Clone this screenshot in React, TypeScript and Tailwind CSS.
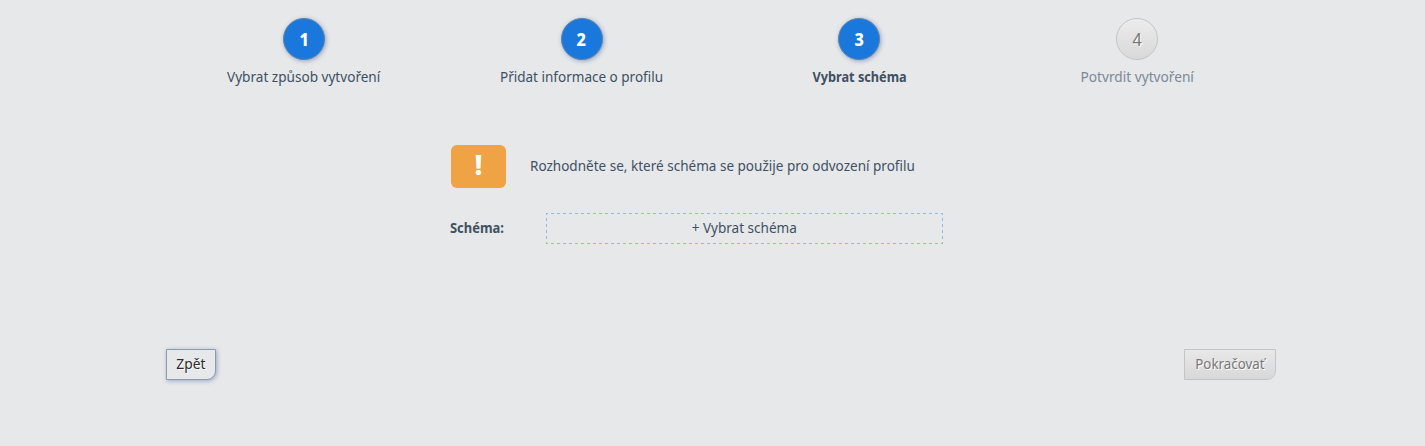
import { clsx } from "clsx";

const steps = [
  { n: "1", label: "Vybrat způsob vytvoření", state: "done", fit: "scale-x-[0.905]" },
  { n: "2", label: "Přidat informace o profilu", state: "done", fit: "scale-x-[0.901]" },
  { n: "3", label: "Vybrat schéma", state: "current", fit: "scale-x-[0.848]" },
  { n: "4", label: "Potvrdit vytvoření", state: "todo", fit: "scale-x-[0.912]" },
];

export default function App() {
  return (
    <div className="h-[446px] bg-[#e6e8ea] pl-[165px] pt-[18px] font-['Noto_Sans',sans-serif] text-[15px] leading-5 text-[#3f5062]">
      <div className="w-[1111px]">
        <ol className="grid grid-cols-4">
          {steps.map((s) => (
            <li key={s.n} className="flex flex-col items-center gap-1.5">
              <span
                className={clsx(
                  "flex size-[42px] items-center justify-center rounded-full border text-[18px]",
                  s.state === "todo"
                    ? "border-[#c5c5c6] bg-linear-to-b from-[#ececec] to-[#d8d8d8] text-[#777] [text-shadow:1px_1px_0_#fff]"
                    : "border-[#5f83a8] bg-[#1a78dd] font-extrabold text-white shadow-[1px_1px_4px_rgba(60,90,150,0.5)]",
                )}
              >
                <span className="scale-x-90 pb-px">{s.n}</span>
              </span>
              <span
                className={clsx(
                  "whitespace-nowrap",
                  s.fit,
                  s.state === "current" && "font-bold",
                  s.state === "todo" && "text-[#7b8896]",
                )}
              >
                {s.label}
              </span>
            </li>
          ))}
        </ol>

        <div className="ml-[285px] mt-[59px] flex h-[43px] items-center">
          <span className="ml-px flex h-[43px] w-[55px] items-center justify-center rounded-md bg-[#efa345] pb-[5px] text-[28px] font-extrabold text-white">
            !
          </span>
          <p className="ml-6 origin-left scale-x-[0.902] whitespace-nowrap pb-[3px]">
            Rozhodněte se, které schéma se použije pro odvození profilu
          </p>
        </div>

        <div className="ml-[285px] mt-[25px] flex h-[31px] items-center">
          <span className="w-24 shrink-0 pb-[3px]">
            <span className="inline-block origin-left scale-x-[0.862] font-bold">Schéma:</span>
          </span>
          <button className="flex h-[31px] w-[397px] items-center justify-center bg-[image:linear-gradient(90deg,#94b9e2_50%,transparent_50%),linear-gradient(90deg,#94b9e2_50%,transparent_50%),linear-gradient(180deg,#94b9e2_50%,transparent_50%),linear-gradient(180deg,#94b9e2_50%,transparent_50%)] [background-position:-1px_0,-1px_100%,0_-1px,100%_-1px] [background-repeat:repeat-x,repeat-x,repeat-y,repeat-y] [background-size:6px_1px,6px_1px,1px_6px,1px_6px]">
            <span className="scale-x-[0.903] pb-[3px]">+ Vybrat schéma</span>
          </button>
        </div>

        <div className="mt-[105px] flex justify-between pl-px">
          <button className="flex h-[31px] w-[50px] items-center justify-center rounded-br-[9px] border border-[#8b9dad] bg-[#e6e8ea] text-[#2c2c2c] shadow-[1px_1px_4px_rgba(60,90,150,0.45)] [text-shadow:1px_1px_0_#fff]">
            <span className="scale-x-[0.92] pb-[3px]">Zpět</span>
          </button>
          <button
            disabled
            className="flex h-[31px] w-[92px] items-center justify-center rounded-br-[9px] border border-[#c5c5c6] bg-linear-to-b from-[#e8e8e8] to-[#d8d8d8] text-[#777] [text-shadow:1px_1px_0_#fff]"
          >
            <span className="scale-x-[0.89] pb-[3px]">Pokračovať</span>
          </button>
        </div>
      </div>
    </div>
  );
}
